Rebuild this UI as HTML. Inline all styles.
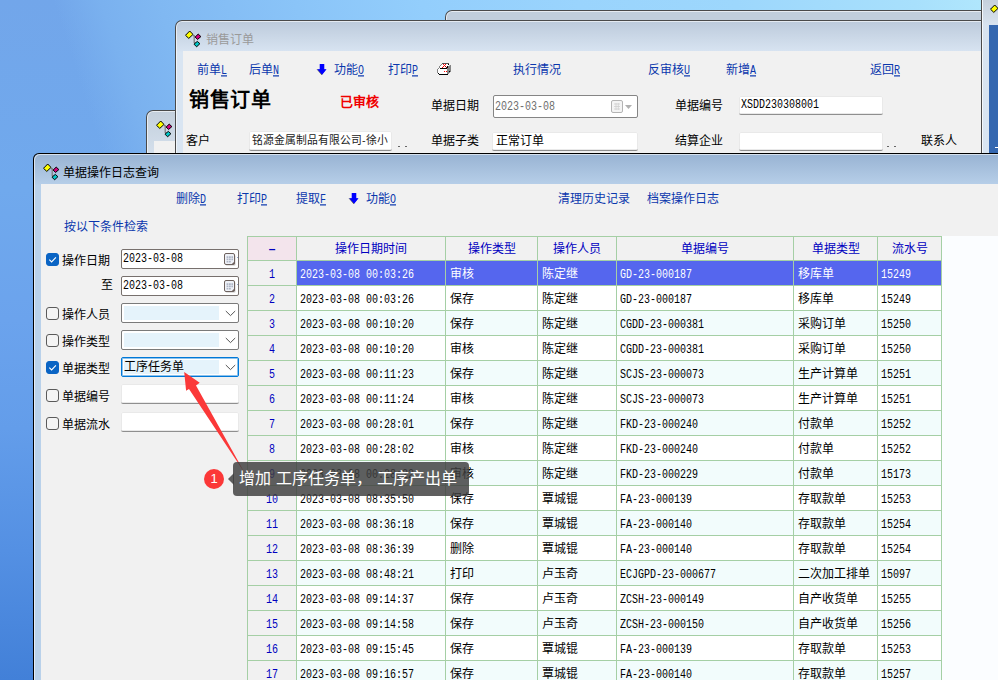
<!DOCTYPE html>
<html lang="zh-CN"><head><meta charset="utf-8"><title>单据操作日志查询</title>
<style>
html,body{margin:0;padding:0}
body{width:998px;height:680px;overflow:hidden;position:relative;font-family:"Liberation Sans",sans-serif;font-size:12px;color:#000;
background:linear-gradient(to bottom,#72a6ea 0%,#70a9ed 28%,#6ba3ed 47%,#639dea 63%,#5490e3 81%,#4280d8 100%)}
div,svg{position:absolute;box-sizing:border-box}
.sky{left:0;top:0;width:998px;height:160px;background:linear-gradient(72deg,rgba(114,166,234,0) 0%,rgba(114,166,234,0) 10%,#7ab1ef 14.5%,#80b8f2 20%,#8ac4f8 33%,#93cefc 45%,#9ad4fd 60%,#9dd7fc 75%,#a8e0fc 92%,#b2e8fd 100%)}
.win{border:1px solid #4a4a4a;border-bottom:0;border-radius:7px 7px 0 0;overflow:hidden}
.win:before{content:"";position:absolute;left:0;top:0;right:0;bottom:0;border:1px solid rgba(255,255,255,.6);border-bottom:0;border-radius:6px 6px 0 0}
.tb,.lb,.lbb{height:16px;line-height:16px;white-space:nowrap;font-size:12px}
.tb,.lbb{color:#0a37ad}
.k,.m{font-family:"Liberation Mono",monospace;font-size:10px}
.k{display:inline-block;transform:scaleY(1.2);transform-origin:0 60%}
.fld{background:#fff;border-bottom:1px solid #8f8f8f;box-shadow:0 0 0 1px #e9e9e9 inset;border-radius:2px;white-space:nowrap;overflow:hidden;font-size:12px;line-height:18px;padding-left:4px}
.dt{background:#fff;border:1px solid #77706d;border-radius:2px;white-space:nowrap;overflow:hidden}
.cb{width:13px;height:13px;border:1px solid #5a5a5a;border-radius:3px;background:#f4f4f4}
.cb.on{background:#0a64c4;border-color:#0a64c4}
.cmb{background:#fff;border:1px solid #7a7a7a;border-radius:2px;overflow:hidden;white-space:nowrap}
.cmb i{position:absolute;left:2px;top:2px;width:95px;height:14px;background:#e5f3fb}
.cmb.f{border-color:#0078d7;box-shadow:0 0 0 1px rgba(0,120,215,.45) inset}
.grid{left:247px;top:236px;width:695px;height:444px;background:#a5cfa5;overflow:hidden}
.c{white-space:nowrap;overflow:hidden;height:24px;line-height:26px;font-size:12px;padding-left:4px}
.h{background:#f1f1f1;color:#0000c0;text-align:center;padding-left:0;height:23px;line-height:25px}
.n{background:#f1f1f1;color:#0000c0;text-align:center;padding-left:0}
.m{display:inline-block;transform:scaleY(1.2);transform-origin:0 55%;font-size:10px;letter-spacing:0}
.sel{background:#5566ee;color:#fff}
.j{display:inline-block;position:static;white-space:nowrap;text-align:justify;text-align-last:justify;vertical-align:top}
</style></head><body>
<div class="sky"></div>

<div class="win" style="left:445px;top:10px;width:560px;height:30px;background:#c1cedc"></div>
<div class="win" style="left:146px;top:110px;width:60px;height:60px;background:linear-gradient(#c3cfdc,#dbe6f2)"><svg class="wi" style="left:9px;top:9px" width="17" height="18" viewBox="0 0 17 18"><path d="M8 5.7H9.2V12.6H10.5M9.2 6.6H10.5" fill="none" stroke="#7a7a7a" stroke-width="1.2"/><path d="M0.5 5.3L4.7 1 8 4.4 3.8 8.4Z" fill="#ffff00" stroke="#000" stroke-width="1"/><path d="M10.1 7.1L13.2 4.1 15.9 6.6 12.6 9.4Z" fill="#d4007f" stroke="#000" stroke-width="1"/><path d="M9 14.2L12.3 11.4 14.9 13.7 11.6 16.8Z" fill="#00c8c8" stroke="#000" stroke-width="1"/></svg><div style="left:7px;top:30px;width:60px;height:30px;background:#f1f1f1"></div></div>
<div class="win" style="left:175px;top:20px;width:830px;height:140px;background:linear-gradient(#bccadb 0,#d7e3f1 30px,#d9e5f2 31px)">
<svg class="wi" style="left:9px;top:9px" width="17" height="18" viewBox="0 0 17 18"><path d="M8 5.7H9.2V12.6H10.5M9.2 6.6H10.5" fill="none" stroke="#7a7a7a" stroke-width="1.2"/><path d="M0.5 5.3L4.7 1 8 4.4 3.8 8.4Z" fill="#ffff00" stroke="#000" stroke-width="1"/><path d="M10.1 7.1L13.2 4.1 15.9 6.6 12.6 9.4Z" fill="#d4007f" stroke="#000" stroke-width="1"/><path d="M9 14.2L12.3 11.4 14.9 13.7 11.6 16.8Z" fill="#00c8c8" stroke="#000" stroke-width="1"/></svg>
<div style="left:30px;top:11px;height:16px;line-height:16px;color:#9a9a9a;white-space:nowrap"><span class="j" style="width:48px">销售订单</span></div>
<div style="left:7px;top:30px;width:830px;height:120px;background:#f1f1f1"></div>
</div>
<div class="tb" style="left:197px;top:62px"><span class="j" style="width:24px">前单</span><u class="k">L</u></div>
<div class="tb" style="left:249px;top:62px"><span class="j" style="width:24px">后单</span><u class="k">N</u></div>
<svg style="position:absolute;left:316px;top:63px" width="12" height="14" viewBox="0 0 12 14"><path d="M3.8 1H8.2V6.2H10.5L5.9 12 1 6.2H3.8Z" fill="#0000ff" stroke="rgba(255,255,245,.7)" stroke-width=".8"/><path d="M3.8 1H8.2V6.2H10.5L5.9 12 1 6.2H3.8Z" fill="#0000ff"/><path d="M1.2 6.5L5.7 11.8" stroke="#6e6e3a" stroke-width="1" stroke-dasharray="1 .5" fill="none"/></svg>
<div class="tb" style="left:334px;top:62px"><span class="j" style="width:24px">功能</span><u class="k">O</u></div>
<div class="tb" style="left:388px;top:62px"><span class="j" style="width:24px">打印</span><u class="k">P</u></div>
<svg style="left:436px;top:62px" width="16" height="14" viewBox="0 0 16 14" shape-rendering="crispEdges"><path fill="#555" d="M6 1h7v1h-7z"/><path fill="#858585" d="M5 2h1v1h-1z"/><path fill="#fff" d="M6 2h1v1h-1z"/><path fill="#ff0000" d="M7 2h1v1h-1z"/><path fill="#fff" d="M8 2h1v1h-1z"/><path fill="#ff0000" d="M9 2h1v1h-1z"/><path fill="#fff" d="M10 2h2v1h-2z"/><path fill="#000" d="M12 2h1v1h-1z"/><path fill="#858585" d="M4 3h1v1h-1z"/><path fill="#fff" d="M5 3h3v1h-3z"/><path fill="#ff0000" d="M8 3h1v1h-1z"/><path fill="#fff" d="M9 3h4v1h-4z"/><path fill="#c0c0c0" d="M13 3h1v1h-1z"/><path fill="#858585" d="M14 3h1v1h-1z"/><path fill="#858585" d="M3 4h1v1h-1z"/><path fill="#fff" d="M4 4h3v1h-3z"/><path fill="#ff0000" d="M7 4h1v1h-1z"/><path fill="#fff" d="M8 4h1v1h-1z"/><path fill="#a00000" d="M9 4h1v1h-1z"/><path fill="#fff" d="M10 4h1v1h-1z"/><path fill="#000" d="M11 4h1v1h-1z"/><path fill="#858585" d="M12 4h3v1h-3z"/><path fill="#858585" d="M3 5h1v1h-1z"/><path fill="#fff" d="M4 5h2v1h-2z"/><path fill="#ff0000" d="M6 5h1v1h-1z"/><path fill="#fff" d="M7 5h3v1h-3z"/><path fill="#a00000" d="M10 5h1v1h-1z"/><path fill="#000" d="M11 5h1v1h-1z"/><path fill="#858585" d="M12 5h3v1h-3z"/><path fill="#858585" d="M2 6h1v1h-1z"/><path fill="#fff" d="M3 6h1v1h-1z"/><path fill="#000" d="M4 6h7v1h-7z"/><path fill="#858585" d="M11 6h4v1h-4z"/><path fill="#858585" d="M1 7h1v1h-1z"/><path fill="#fff" d="M2 7h9v1h-9z"/><path fill="#858585" d="M11 7h4v1h-4z"/><path fill="#858585" d="M1 8h1v1h-1z"/><path fill="#fff" d="M2 8h9v1h-9z"/><path fill="#858585" d="M11 8h4v1h-4z"/><path fill="#858585" d="M1 9h1v1h-1z"/><path fill="#fff" d="M2 9h6v1h-6z"/><path fill="#ff0000" d="M8 9h1v1h-1z"/><path fill="#fff" d="M9 9h1v1h-1z"/><path fill="#ff0000" d="M10 9h1v1h-1z"/><path fill="#858585" d="M11 9h2v1h-2z"/><path fill="#000" d="M13 9h1v1h-1z"/><path fill="#858585" d="M14 9h1v1h-1z"/><path fill="#858585" d="M1 10h1v1h-1z"/><path fill="#fff" d="M2 10h9v1h-9z"/><path fill="#858585" d="M11 10h3v1h-3z"/><path fill="#000" d="M2 11h1v1h-1z"/><path fill="#fff" d="M3 11h8v1h-8z"/><path fill="#858585" d="M11 11h2v1h-2z"/><path fill="#000" d="M3 12h9v1h-9z"/></svg>
<div class="tb" style="left:513px;top:62px"><span class="j" style="width:48px">执行情况</span></div>
<div class="tb" style="left:648px;top:62px"><span class="j" style="width:36px">反审核</span><u class="k">U</u></div>
<div class="tb" style="left:726px;top:62px"><span class="j" style="width:24px">新增</span><u class="k">A</u></div>
<div class="tb" style="left:870px;top:62px"><span class="j" style="width:24px">返回</span><u class="k">R</u></div>
<div style="left:189px;top:86px;height:28px;line-height:28px;font-weight:bold;font-size:20px;white-space:nowrap"><span class="j" style="width:82px">销售订单</span></div>
<div style="left:340px;top:94px;height:16px;line-height:16px;font-weight:bold;font-size:13px;color:#f00000;white-space:nowrap"><span class="j" style="width:39px">已审核</span></div>
<div class="lb" style="left:431px;top:98px"><span class="j" style="width:48px">单据日期</span></div>
<div class="dt" style="left:493px;top:95px;width:145px;height:23px;border-color:#858585"><span class="m" style="position:absolute;left:1px;top:6px;color:#6e6e6e">2023-03-08</span><svg style="left:117px;top:4px" width="24" height="15" viewBox="0 0 24 15"><rect x=".5" y=".5" width="11" height="12" rx="1.5" fill="#f4f4f4" stroke="#b4b4b4"/><path d="M3 4h6M3 6.5h6M3 9h6M5 3v7M7.3 3v7" stroke="#cfcfcf" stroke-width=".8"/><path d="M14 5h7l-3.5 4z" fill="#b0b0b0"/></svg></div>
<div class="lb" style="left:675px;top:98px"><span class="j" style="width:48px">单据编号</span></div>
<div class="fld" style="left:739px;top:96px;width:144px;height:19px;padding-left:2px;line-height:17px"><span class="m" style="position:relative;top:0px">XSDD230308001</span></div>
<div class="lb" style="left:186px;top:133px"><span class="j" style="width:24px">客户</span></div>
<div class="fld" style="left:249px;top:131px;width:143px;height:20px;line-height:18px;font-size:10.8px;padding-left:3px;color:#222"><span class="j" style="width:135px">铭源金属制品有限公司-徐小</span></div>
<div style="left:398px;top:146px;width:2px;height:1px;background:#666"></div><div style="left:405px;top:146px;width:2px;height:1px;background:#666"></div>
<div class="lb" style="left:431px;top:133px"><span class="j" style="width:48px">单据子类</span></div>
<div class="fld" style="left:492px;top:132px;width:146px;height:19px;line-height:18px"><span class="j" style="width:48px">正常订单</span></div>
<div class="lb" style="left:675px;top:133px"><span class="j" style="width:48px">结算企业</span></div>
<div class="fld" style="left:739px;top:132px;width:144px;height:19px"></div>
<div style="left:887px;top:146px;width:2px;height:1px;background:#666"></div><div style="left:894px;top:146px;width:2px;height:1px;background:#666"></div>
<div class="lb" style="left:921px;top:133px"><span class="j" style="width:36px">联系人</span></div>
<div style="left:981px;top:0;width:17px;height:153px;background:linear-gradient(#c5d0dc,#d8e3ef 25px,#d9e5f2);border-left:1px solid #4a4a4a"></div>
<div style="left:982px;top:0;width:1px;height:153px;background:#f4f8fc"></div>
<div style="left:989px;top:25px;width:9px;height:128px;background:#3467b0"></div>
<div style="left:995px;top:147px;width:3px;height:1px;background:#fff"></div>
<svg style="left:990px;top:4px" width="8" height="10" viewBox="0 0 8 10"><path d="M.5 5.2L4.7 1 8 4.4 3.8 8.4Z" fill="#ffff00" stroke="#000" stroke-width="1"/></svg>
<div class="win" style="left:33px;top:153px;width:980px;height:540px;border-color:#000;border-radius:6px 6px 0 0;background:linear-gradient(#98b3d3 0,#b6cee8 30px,#b9d1ea 31px)">
<svg class="wi" style="left:9px;top:9px" width="17" height="18" viewBox="0 0 17 18"><path d="M8 5.7H9.2V12.6H10.5M9.2 6.6H10.5" fill="none" stroke="#7a7a7a" stroke-width="1.2"/><path d="M0.5 5.3L4.7 1 8 4.4 3.8 8.4Z" fill="#ffff00" stroke="#000" stroke-width="1"/><path d="M10.1 7.1L13.2 4.1 15.9 6.6 12.6 9.4Z" fill="#d4007f" stroke="#000" stroke-width="1"/><path d="M9 14.2L12.3 11.4 14.9 13.7 11.6 16.8Z" fill="#00c8c8" stroke="#000" stroke-width="1"/></svg>
<div style="left:29px;top:11px;height:16px;line-height:16px;white-space:nowrap;color:#000"><span class="j" style="width:96px">单据操作日志查询</span></div>
<div style="left:7px;top:30px;width:980px;height:520px;background:#f1f1f1"></div>
</div>
<div class="tb" style="left:176px;top:191px"><span class="j" style="width:24px">删除</span><u class="k">D</u></div>
<div class="tb" style="left:237px;top:191px"><span class="j" style="width:24px">打印</span><u class="k">P</u></div>
<div class="tb" style="left:296px;top:191px"><span class="j" style="width:24px">提取</span><u class="k">F</u></div>
<svg style="position:absolute;left:348px;top:192px" width="12" height="14" viewBox="0 0 12 14"><path d="M3.8 1H8.2V6.2H10.5L5.9 12 1 6.2H3.8Z" fill="#0000ff" stroke="rgba(255,255,245,.7)" stroke-width=".8"/><path d="M3.8 1H8.2V6.2H10.5L5.9 12 1 6.2H3.8Z" fill="#0000ff"/><path d="M1.2 6.5L5.7 11.8" stroke="#6e6e3a" stroke-width="1" stroke-dasharray="1 .5" fill="none"/></svg>
<div class="tb" style="left:366px;top:191px"><span class="j" style="width:24px">功能</span><u class="k">O</u></div>
<div class="tb" style="left:558px;top:191px"><span class="j" style="width:72px">清理历史记录</span></div>
<div class="tb" style="left:647px;top:191px"><span class="j" style="width:72px">档案操作日志</span></div>
<div class="lbb" style="left:64px;top:219px"><span class="j" style="width:84px">按以下条件检索</span></div>
<div class="cb on" style="left:46px;top:253px"><svg style="left:1px;top:1px" width="9" height="9" viewBox="0 0 9 9"><path d="M1.3 4.6L3.6 6.9 7.9 2.3" fill="none" stroke="#fff" stroke-width="1.1"/></svg></div>
<div class="lb" style="left:62px;top:253px"><span class="j" style="width:48px">操作日期</span></div>
<div class="dt" style="left:121px;top:249px;width:118px;height:20px"><span class="m" style="position:absolute;left:1px;top:4px">2023-03-08</span><svg style="left:102px;top:3px" width="16" height="14" viewBox="0 0 16 14"><rect x="1.6" y="1.8" width="10" height="11" rx="1.5" fill="rgba(0,0,0,.16)"/><rect x=".5" y=".5" width="10" height="11" rx="1.5" fill="#eef1f7" stroke="#6e625e"/><path d="M2.6 3.3h1.8v1.7H2.6zM5 3.3h1.8v1.7H5zM7.4 3.3h1.6v1.7H7.4zM2.6 5.6h1.8v1.7H2.6zM5 5.6h1.8v1.7H5zM7.4 5.6h1.6v1.7H7.4zM2.6 7.9h1.8v1.7H2.6zM5 7.9h1.8v1.7H5z" fill="#aeb6c6"/><path d="M7.6 11.2L10.7 8.2V11.2Z" fill="#6e625e"/><path d="M13 4h2v1.8z" fill="#2a50a0"/></svg></div>
<div class="lb" style="left:101px;top:277px"><span class="j" style="width:12px">至</span></div>
<div class="dt" style="left:121px;top:276px;width:118px;height:20px"><span class="m" style="position:absolute;left:1px;top:4px">2023-03-08</span><svg style="left:102px;top:3px" width="16" height="14" viewBox="0 0 16 14"><rect x="1.6" y="1.8" width="10" height="11" rx="1.5" fill="rgba(0,0,0,.16)"/><rect x=".5" y=".5" width="10" height="11" rx="1.5" fill="#eef1f7" stroke="#6e625e"/><path d="M2.6 3.3h1.8v1.7H2.6zM5 3.3h1.8v1.7H5zM7.4 3.3h1.6v1.7H7.4zM2.6 5.6h1.8v1.7H2.6zM5 5.6h1.8v1.7H5zM7.4 5.6h1.6v1.7H7.4zM2.6 7.9h1.8v1.7H2.6zM5 7.9h1.8v1.7H5z" fill="#aeb6c6"/><path d="M7.6 11.2L10.7 8.2V11.2Z" fill="#6e625e"/><path d="M13 4h2v1.8z" fill="#2a50a0"/></svg></div>
<div class="cb" style="left:46px;top:307px"></div>
<div class="lb" style="left:62px;top:307px"><span class="j" style="width:48px">操作人员</span></div>
<div class="cmb" style="left:121px;top:303px;width:118px;height:20px"><i></i><svg style="left:103px;top:6px" width="11" height="7" viewBox="0 0 11 7"><path d="M.8 1L5.5 5.6 10.2 1" fill="none" stroke="#555" stroke-width="1"/></svg></div>
<div class="cb" style="left:46px;top:334px"></div>
<div class="lb" style="left:62px;top:334px"><span class="j" style="width:48px">操作类型</span></div>
<div class="cmb" style="left:121px;top:330px;width:118px;height:20px"><i></i><svg style="left:103px;top:6px" width="11" height="7" viewBox="0 0 11 7"><path d="M.8 1L5.5 5.6 10.2 1" fill="none" stroke="#555" stroke-width="1"/></svg></div>
<div class="cb on" style="left:46px;top:361px"><svg style="left:1px;top:1px" width="9" height="9" viewBox="0 0 9 9"><path d="M1.3 4.6L3.6 6.9 7.9 2.3" fill="none" stroke="#fff" stroke-width="1.1"/></svg></div>
<div class="lb" style="left:62px;top:361px"><span class="j" style="width:48px">单据类型</span></div>
<div class="cmb f" style="left:121px;top:357px;width:118px;height:20px"><i></i><span style="position:absolute;left:2px;top:1px;line-height:16px;font-size:12px"><span class="j" style="width:60px">工序任务单</span></span><svg style="left:103px;top:6px" width="11" height="7" viewBox="0 0 11 7"><path d="M.8 1L5.5 5.6 10.2 1" fill="none" stroke="#555" stroke-width="1"/></svg></div>
<div class="cb" style="left:46px;top:389px"></div>
<div class="lb" style="left:62px;top:389px"><span class="j" style="width:48px">单据编号</span></div>
<div class="fld" style="left:121px;top:384px;width:118px;height:20px"></div>
<div class="cb" style="left:46px;top:417px"></div>
<div class="lb" style="left:62px;top:417px"><span class="j" style="width:48px">单据流水</span></div>
<div class="fld" style="left:121px;top:412px;width:118px;height:20px"></div>
<div style="left:942px;top:236px;width:56px;height:444px;background:#fbfdff"></div>
<div class="grid">
<div class="c h" style="left:1px;top:1px;width:48px;background:#f3e4ec;"><b>–</b></div>
<div class="c h" style="left:50px;top:1px;width:148px;"><span class="j" style="width:72px">操作日期时间</span></div>
<div class="c h" style="left:199px;top:1px;width:91px;"><span class="j" style="width:48px">操作类型</span></div>
<div class="c h" style="left:291px;top:1px;width:78px;"><span class="j" style="width:48px">操作人员</span></div>
<div class="c h" style="left:370px;top:1px;width:176px;"><span class="j" style="width:48px">单据编号</span></div>
<div class="c h" style="left:547px;top:1px;width:83px;"><span class="j" style="width:48px">单据类型</span></div>
<div class="c h" style="left:631px;top:1px;width:63px;"><span class="j" style="width:36px">流水号</span></div>
<div class="c n" style="left:1px;top:25px;width:48px"><span class="m">1</span></div>
<div class="c sel" style="left:50px;top:25px;width:148px;"><span class="m" style="margin-left:-1px">2023-03-08 00:03:26</span></div>
<div class="c sel" style="left:199px;top:25px;width:91px;"><span class="j" style="width:24px">审核</span></div>
<div class="c sel" style="left:291px;top:25px;width:78px;"><span class="j" style="width:36px">陈定继</span></div>
<div class="c sel" style="left:370px;top:25px;width:176px;"><span class="m" style="margin-left:-1px">GD-23-000187</span></div>
<div class="c sel" style="left:547px;top:25px;width:83px;"><span class="j" style="width:36px">移库单</span></div>
<div class="c sel" style="left:631px;top:25px;width:63px;"><span class="m" style="margin-left:-1px">15249</span></div>
<div class="c n" style="left:1px;top:50px;width:48px"><span class="m">2</span></div>
<div class="c" style="left:50px;top:50px;width:148px;background:#fff;"><span class="m" style="margin-left:-1px">2023-03-08 00:03:26</span></div>
<div class="c" style="left:199px;top:50px;width:91px;background:#fff;"><span class="j" style="width:24px">保存</span></div>
<div class="c" style="left:291px;top:50px;width:78px;background:#fff;"><span class="j" style="width:36px">陈定继</span></div>
<div class="c" style="left:370px;top:50px;width:176px;background:#fff;"><span class="m" style="margin-left:-1px">GD-23-000187</span></div>
<div class="c" style="left:547px;top:50px;width:83px;background:#fff;"><span class="j" style="width:36px">移库单</span></div>
<div class="c" style="left:631px;top:50px;width:63px;background:#fff;"><span class="m" style="margin-left:-1px">15249</span></div>
<div class="c n" style="left:1px;top:75px;width:48px"><span class="m">3</span></div>
<div class="c" style="left:50px;top:75px;width:148px;background:#f2fcfc;"><span class="m" style="margin-left:-1px">2023-03-08 00:10:20</span></div>
<div class="c" style="left:199px;top:75px;width:91px;background:#f2fcfc;"><span class="j" style="width:24px">保存</span></div>
<div class="c" style="left:291px;top:75px;width:78px;background:#f2fcfc;"><span class="j" style="width:36px">陈定继</span></div>
<div class="c" style="left:370px;top:75px;width:176px;background:#f2fcfc;"><span class="m" style="margin-left:-1px">CGDD-23-000381</span></div>
<div class="c" style="left:547px;top:75px;width:83px;background:#f2fcfc;"><span class="j" style="width:48px">采购订单</span></div>
<div class="c" style="left:631px;top:75px;width:63px;background:#f2fcfc;"><span class="m" style="margin-left:-1px">15250</span></div>
<div class="c n" style="left:1px;top:100px;width:48px"><span class="m">4</span></div>
<div class="c" style="left:50px;top:100px;width:148px;background:#fff;"><span class="m" style="margin-left:-1px">2023-03-08 00:10:20</span></div>
<div class="c" style="left:199px;top:100px;width:91px;background:#fff;"><span class="j" style="width:24px">审核</span></div>
<div class="c" style="left:291px;top:100px;width:78px;background:#fff;"><span class="j" style="width:36px">陈定继</span></div>
<div class="c" style="left:370px;top:100px;width:176px;background:#fff;"><span class="m" style="margin-left:-1px">CGDD-23-000381</span></div>
<div class="c" style="left:547px;top:100px;width:83px;background:#fff;"><span class="j" style="width:48px">采购订单</span></div>
<div class="c" style="left:631px;top:100px;width:63px;background:#fff;"><span class="m" style="margin-left:-1px">15250</span></div>
<div class="c n" style="left:1px;top:125px;width:48px"><span class="m">5</span></div>
<div class="c" style="left:50px;top:125px;width:148px;background:#f2fcfc;"><span class="m" style="margin-left:-1px">2023-03-08 00:11:23</span></div>
<div class="c" style="left:199px;top:125px;width:91px;background:#f2fcfc;"><span class="j" style="width:24px">保存</span></div>
<div class="c" style="left:291px;top:125px;width:78px;background:#f2fcfc;"><span class="j" style="width:36px">陈定继</span></div>
<div class="c" style="left:370px;top:125px;width:176px;background:#f2fcfc;"><span class="m" style="margin-left:-1px">SCJS-23-000073</span></div>
<div class="c" style="left:547px;top:125px;width:83px;background:#f2fcfc;"><span class="j" style="width:60px">生产计算单</span></div>
<div class="c" style="left:631px;top:125px;width:63px;background:#f2fcfc;"><span class="m" style="margin-left:-1px">15251</span></div>
<div class="c n" style="left:1px;top:150px;width:48px"><span class="m">6</span></div>
<div class="c" style="left:50px;top:150px;width:148px;background:#fff;"><span class="m" style="margin-left:-1px">2023-03-08 00:11:24</span></div>
<div class="c" style="left:199px;top:150px;width:91px;background:#fff;"><span class="j" style="width:24px">审核</span></div>
<div class="c" style="left:291px;top:150px;width:78px;background:#fff;"><span class="j" style="width:36px">陈定继</span></div>
<div class="c" style="left:370px;top:150px;width:176px;background:#fff;"><span class="m" style="margin-left:-1px">SCJS-23-000073</span></div>
<div class="c" style="left:547px;top:150px;width:83px;background:#fff;"><span class="j" style="width:60px">生产计算单</span></div>
<div class="c" style="left:631px;top:150px;width:63px;background:#fff;"><span class="m" style="margin-left:-1px">15251</span></div>
<div class="c n" style="left:1px;top:175px;width:48px"><span class="m">7</span></div>
<div class="c" style="left:50px;top:175px;width:148px;background:#f2fcfc;"><span class="m" style="margin-left:-1px">2023-03-08 00:28:01</span></div>
<div class="c" style="left:199px;top:175px;width:91px;background:#f2fcfc;"><span class="j" style="width:24px">保存</span></div>
<div class="c" style="left:291px;top:175px;width:78px;background:#f2fcfc;"><span class="j" style="width:36px">陈定继</span></div>
<div class="c" style="left:370px;top:175px;width:176px;background:#f2fcfc;"><span class="m" style="margin-left:-1px">FKD-23-000240</span></div>
<div class="c" style="left:547px;top:175px;width:83px;background:#f2fcfc;"><span class="j" style="width:36px">付款单</span></div>
<div class="c" style="left:631px;top:175px;width:63px;background:#f2fcfc;"><span class="m" style="margin-left:-1px">15252</span></div>
<div class="c n" style="left:1px;top:200px;width:48px"><span class="m">8</span></div>
<div class="c" style="left:50px;top:200px;width:148px;background:#fff;"><span class="m" style="margin-left:-1px">2023-03-08 00:28:02</span></div>
<div class="c" style="left:199px;top:200px;width:91px;background:#fff;"><span class="j" style="width:24px">审核</span></div>
<div class="c" style="left:291px;top:200px;width:78px;background:#fff;"><span class="j" style="width:36px">陈定继</span></div>
<div class="c" style="left:370px;top:200px;width:176px;background:#fff;"><span class="m" style="margin-left:-1px">FKD-23-000240</span></div>
<div class="c" style="left:547px;top:200px;width:83px;background:#fff;"><span class="j" style="width:36px">付款单</span></div>
<div class="c" style="left:631px;top:200px;width:63px;background:#fff;"><span class="m" style="margin-left:-1px">15252</span></div>
<div class="c n" style="left:1px;top:225px;width:48px"><span class="m">9</span></div>
<div class="c" style="left:50px;top:225px;width:148px;background:#f2fcfc;"><span class="m" style="margin-left:-1px">2023-03-08 00:28:22</span></div>
<div class="c" style="left:199px;top:225px;width:91px;background:#f2fcfc;"><span class="j" style="width:24px">审核</span></div>
<div class="c" style="left:291px;top:225px;width:78px;background:#f2fcfc;"><span class="j" style="width:36px">陈定继</span></div>
<div class="c" style="left:370px;top:225px;width:176px;background:#f2fcfc;"><span class="m" style="margin-left:-1px">FKD-23-000229</span></div>
<div class="c" style="left:547px;top:225px;width:83px;background:#f2fcfc;"><span class="j" style="width:36px">付款单</span></div>
<div class="c" style="left:631px;top:225px;width:63px;background:#f2fcfc;"><span class="m" style="margin-left:-1px">15173</span></div>
<div class="c n" style="left:1px;top:250px;width:48px"><span class="m">10</span></div>
<div class="c" style="left:50px;top:250px;width:148px;background:#fff;"><span class="m" style="margin-left:-1px">2023-03-08 08:35:50</span></div>
<div class="c" style="left:199px;top:250px;width:91px;background:#fff;"><span class="j" style="width:24px">保存</span></div>
<div class="c" style="left:291px;top:250px;width:78px;background:#fff;"><span class="j" style="width:36px">覃城锟</span></div>
<div class="c" style="left:370px;top:250px;width:176px;background:#fff;"><span class="m" style="margin-left:-1px">FA-23-000139</span></div>
<div class="c" style="left:547px;top:250px;width:83px;background:#fff;"><span class="j" style="width:48px">存取款单</span></div>
<div class="c" style="left:631px;top:250px;width:63px;background:#fff;"><span class="m" style="margin-left:-1px">15253</span></div>
<div class="c n" style="left:1px;top:275px;width:48px"><span class="m">11</span></div>
<div class="c" style="left:50px;top:275px;width:148px;background:#f2fcfc;"><span class="m" style="margin-left:-1px">2023-03-08 08:36:18</span></div>
<div class="c" style="left:199px;top:275px;width:91px;background:#f2fcfc;"><span class="j" style="width:24px">保存</span></div>
<div class="c" style="left:291px;top:275px;width:78px;background:#f2fcfc;"><span class="j" style="width:36px">覃城锟</span></div>
<div class="c" style="left:370px;top:275px;width:176px;background:#f2fcfc;"><span class="m" style="margin-left:-1px">FA-23-000140</span></div>
<div class="c" style="left:547px;top:275px;width:83px;background:#f2fcfc;"><span class="j" style="width:48px">存取款单</span></div>
<div class="c" style="left:631px;top:275px;width:63px;background:#f2fcfc;"><span class="m" style="margin-left:-1px">15254</span></div>
<div class="c n" style="left:1px;top:300px;width:48px"><span class="m">12</span></div>
<div class="c" style="left:50px;top:300px;width:148px;background:#fff;"><span class="m" style="margin-left:-1px">2023-03-08 08:36:39</span></div>
<div class="c" style="left:199px;top:300px;width:91px;background:#fff;"><span class="j" style="width:24px">删除</span></div>
<div class="c" style="left:291px;top:300px;width:78px;background:#fff;"><span class="j" style="width:36px">覃城锟</span></div>
<div class="c" style="left:370px;top:300px;width:176px;background:#fff;"><span class="m" style="margin-left:-1px">FA-23-000140</span></div>
<div class="c" style="left:547px;top:300px;width:83px;background:#fff;"><span class="j" style="width:48px">存取款单</span></div>
<div class="c" style="left:631px;top:300px;width:63px;background:#fff;"><span class="m" style="margin-left:-1px">15254</span></div>
<div class="c n" style="left:1px;top:325px;width:48px"><span class="m">13</span></div>
<div class="c" style="left:50px;top:325px;width:148px;background:#f2fcfc;"><span class="m" style="margin-left:-1px">2023-03-08 08:48:21</span></div>
<div class="c" style="left:199px;top:325px;width:91px;background:#f2fcfc;"><span class="j" style="width:24px">打印</span></div>
<div class="c" style="left:291px;top:325px;width:78px;background:#f2fcfc;"><span class="j" style="width:36px">卢玉奇</span></div>
<div class="c" style="left:370px;top:325px;width:176px;background:#f2fcfc;"><span class="m" style="margin-left:-1px">ECJGPD-23-000677</span></div>
<div class="c" style="left:547px;top:325px;width:83px;background:#f2fcfc;"><span class="j" style="width:72px">二次加工排单</span></div>
<div class="c" style="left:631px;top:325px;width:63px;background:#f2fcfc;"><span class="m" style="margin-left:-1px">15097</span></div>
<div class="c n" style="left:1px;top:350px;width:48px"><span class="m">14</span></div>
<div class="c" style="left:50px;top:350px;width:148px;background:#fff;"><span class="m" style="margin-left:-1px">2023-03-08 09:14:37</span></div>
<div class="c" style="left:199px;top:350px;width:91px;background:#fff;"><span class="j" style="width:24px">保存</span></div>
<div class="c" style="left:291px;top:350px;width:78px;background:#fff;"><span class="j" style="width:36px">卢玉奇</span></div>
<div class="c" style="left:370px;top:350px;width:176px;background:#fff;"><span class="m" style="margin-left:-1px">ZCSH-23-000149</span></div>
<div class="c" style="left:547px;top:350px;width:83px;background:#fff;"><span class="j" style="width:60px">自产收货单</span></div>
<div class="c" style="left:631px;top:350px;width:63px;background:#fff;"><span class="m" style="margin-left:-1px">15255</span></div>
<div class="c n" style="left:1px;top:375px;width:48px"><span class="m">15</span></div>
<div class="c" style="left:50px;top:375px;width:148px;background:#f2fcfc;"><span class="m" style="margin-left:-1px">2023-03-08 09:14:58</span></div>
<div class="c" style="left:199px;top:375px;width:91px;background:#f2fcfc;"><span class="j" style="width:24px">保存</span></div>
<div class="c" style="left:291px;top:375px;width:78px;background:#f2fcfc;"><span class="j" style="width:36px">卢玉奇</span></div>
<div class="c" style="left:370px;top:375px;width:176px;background:#f2fcfc;"><span class="m" style="margin-left:-1px">ZCSH-23-000150</span></div>
<div class="c" style="left:547px;top:375px;width:83px;background:#f2fcfc;"><span class="j" style="width:60px">自产收货单</span></div>
<div class="c" style="left:631px;top:375px;width:63px;background:#f2fcfc;"><span class="m" style="margin-left:-1px">15256</span></div>
<div class="c n" style="left:1px;top:400px;width:48px"><span class="m">16</span></div>
<div class="c" style="left:50px;top:400px;width:148px;background:#fff;"><span class="m" style="margin-left:-1px">2023-03-08 09:15:45</span></div>
<div class="c" style="left:199px;top:400px;width:91px;background:#fff;"><span class="j" style="width:24px">保存</span></div>
<div class="c" style="left:291px;top:400px;width:78px;background:#fff;"><span class="j" style="width:36px">覃城锟</span></div>
<div class="c" style="left:370px;top:400px;width:176px;background:#fff;"><span class="m" style="margin-left:-1px">FA-23-000139</span></div>
<div class="c" style="left:547px;top:400px;width:83px;background:#fff;"><span class="j" style="width:48px">存取款单</span></div>
<div class="c" style="left:631px;top:400px;width:63px;background:#fff;"><span class="m" style="margin-left:-1px">15253</span></div>
<div class="c n" style="left:1px;top:425px;width:48px"><span class="m">17</span></div>
<div class="c" style="left:50px;top:425px;width:148px;background:#f2fcfc;"><span class="m" style="margin-left:-1px">2023-03-08 09:16:57</span></div>
<div class="c" style="left:199px;top:425px;width:91px;background:#f2fcfc;"><span class="j" style="width:24px">保存</span></div>
<div class="c" style="left:291px;top:425px;width:78px;background:#f2fcfc;"><span class="j" style="width:36px">覃城锟</span></div>
<div class="c" style="left:370px;top:425px;width:176px;background:#f2fcfc;"><span class="m" style="margin-left:-1px">FA-23-000140</span></div>
<div class="c" style="left:547px;top:425px;width:83px;background:#f2fcfc;"><span class="j" style="width:48px">存取款单</span></div>
<div class="c" style="left:631px;top:425px;width:63px;background:#f2fcfc;"><span class="m" style="margin-left:-1px">15257</span></div>
</div>
<svg style="left:170px;top:360px" width="100" height="130" viewBox="170 360 100 130"><path d="M184.2 372L199.7 382.7 196 385.6 245 473.5 189 389 186.1 390.8Z" fill="#fb3838"/></svg>
<div style="left:233px;top:462px;width:236px;height:34px;border-radius:4px;background:rgba(62,62,62,.83)"></div>
<svg style="left:227px;top:473px" width="7" height="12" viewBox="0 0 7 12"><path d="M7 0V12L1 6Z" fill="rgba(62,62,62,.83)"/></svg>
<div style="left:239px;top:467px;height:24px;line-height:24px;font-size:16px;color:#fff;white-space:nowrap"><span class="j" style="width:218px">增加 工序任务单， 工序产出单</span></div>
<div style="left:204px;top:469px;width:20px;height:20px;border-radius:50%;background:#fb3838;color:#fff;text-align:center;line-height:20px;font-size:13px">1</div>
</body></html>
